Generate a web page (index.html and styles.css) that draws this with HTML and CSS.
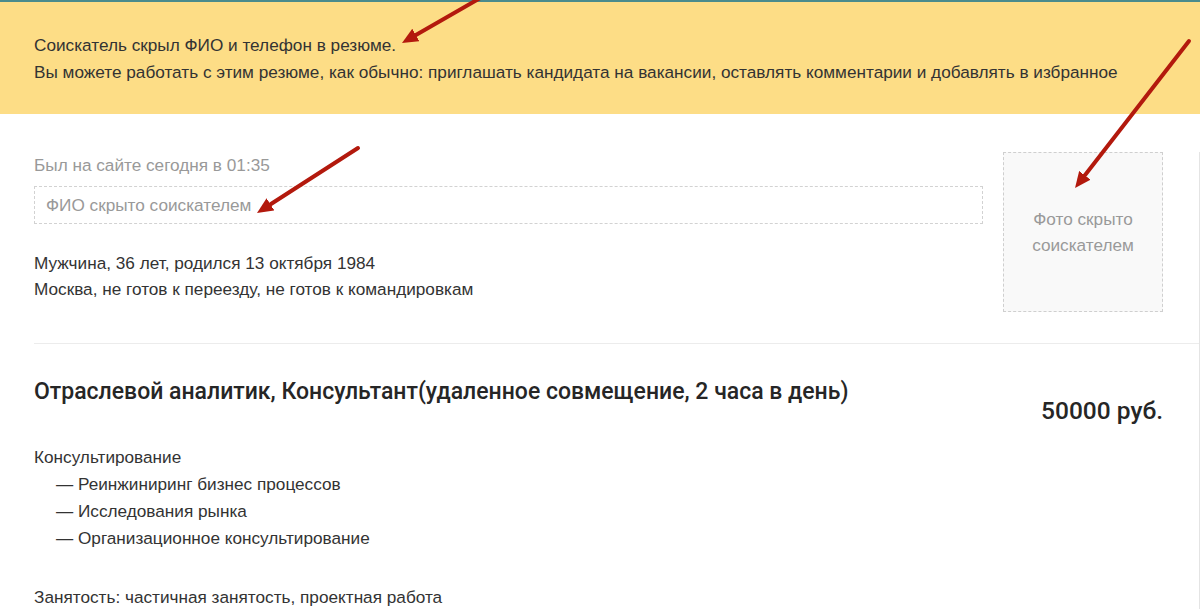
FILE: index.html
```html
<!DOCTYPE html>
<html lang="ru">
<head>
  <meta charset="UTF-8">
  <meta name="viewport" content="width=device-width, initial-scale=1.0">
  <title>Резюме</title>
  <link rel="stylesheet" href="styles.css">
</head>
<body>
  <div class="notice">
    <p>Соискатель скрыл ФИО и телефон в резюме.</p>
    <p>Вы можете работать с этим резюме, как обычно: приглашать кандидата на вакансии, оставлять комментарии и добавлять в избранное</p>
  </div>

  <main class="resume">
    <div class="resume-head">
      <div class="resume-info">
        <div class="last-seen">Был на сайте сегодня в 01:35</div>
        <div class="hidden-name">ФИО скрыто соискателем</div>
        <div class="personal">
          <p>Мужчина, 36 лет, родился 13 октября 1984</p>
          <p>Москва, не готов к переезду, не готов к командировкам</p>
        </div>
      </div>
      <div class="photo">Фото скрыто<br>соискателем</div>
    </div>

    <div class="position">
      <h2 class="position-title">Отраслевой аналитик, Консультант(удаленное совмещение, 2 часа в день)</h2>
      <div class="salary">50000 руб.</div>
    </div>

    <div class="spec">
      <p>Консультирование</p>
      <ul>
        <li>— Реинжиниринг бизнес процессов</li>
        <li>— Исследования рынка</li>
        <li>— Организационное консультирование</li>
      </ul>
    </div>

    <p class="employment">Занятость: частичная занятость, проектная работа</p>
  </main>

  <!-- стрелки поверх скриншота -->
  <svg class="arrows" width="1200" height="609" viewBox="0 0 1200 609">
    <defs>
      <marker id="head" markerWidth="4" markerHeight="3.6" refX="1" refY="1.8" orient="auto" markerUnits="strokeWidth">
        <path d="M0,0 L4,1.8 L0,3.6 z" fill="#b3190d"/>
      </marker>
    </defs>
    <line x1="482" y1="-3" x2="412.4" y2="37" marker-end="url(#head)"/>
    <line x1="358" y1="148" x2="267.1" y2="206.5" marker-end="url(#head)"/>
    <line x1="1189" y1="41" x2="1082.4" y2="178.5" marker-end="url(#head)"/>
  </svg>
</body>
</html>
```

FILE: styles.css
```css
body {
  margin: 0;
  padding: 0;
  font-family: "Liberation Sans", Arial, sans-serif;
  font-size: 17.2px;
  color: #333;
  background: #fff;
  position: relative;
  overflow: hidden;
}

p {
  margin: 0;
}

.notice {
  border-top: 2px solid #4a8b8c;
  background-color: #fddd86;
  padding: 30px 34px 28px;
  line-height: 27px;
}

.resume {
  margin: 38px 0 0 34px;
  border-right: 1px solid #e4e4e4;
}

.resume-head {
  display: flex;
  align-items: flex-start;
  padding-bottom: 31px;
  border-bottom: 1px solid #ececec;
}

.resume-info {
  flex: 1;
  line-height: 26px;
}

.last-seen {
  color: #999;
}

.hidden-name {
  margin-top: 8px;
  border: 1px dashed #d2d2d2;
  padding: 0 11px;
  line-height: 36px;
  color: #999;
}

.personal {
  margin-top: 26px;
}

.photo {
  width: 158px;
  height: 158px;
  margin: 0 36px 0 20px;
  border: 1px dashed #cfcfcf;
  background: #f9f9f9;
  color: #999;
  line-height: 26px;
  text-align: center;
  display: flex;
  align-items: center;
  justify-content: center;
}

.position {
  display: flex;
  justify-content: space-between;
  padding: 34px 36px 0 0;
}

.position-title {
  margin: 0;
  font-family: Roboto, "Liberation Sans", sans-serif;
  font-weight: 500;
  font-size: 23px;
  line-height: 28px;
  color: #262626;
}

.salary {
  margin-top: 19px;
  font-family: Roboto, "Liberation Sans", sans-serif;
  font-weight: 500;
  font-size: 24.5px;
  line-height: 28px;
  color: #262626;
}

.spec {
  margin-top: 19px;
  line-height: 27px;
}

.spec ul {
  list-style: none;
  margin: 0;
  padding: 0 0 0 22px;
}

.employment {
  margin-top: 32px;
  line-height: 27px;
}

.arrows {
  position: absolute;
  top: 0;
  left: 0;
  pointer-events: none;
}

.arrows line {
  stroke: #b3190d;
  stroke-width: 4;
  stroke-linecap: round;
}
```
